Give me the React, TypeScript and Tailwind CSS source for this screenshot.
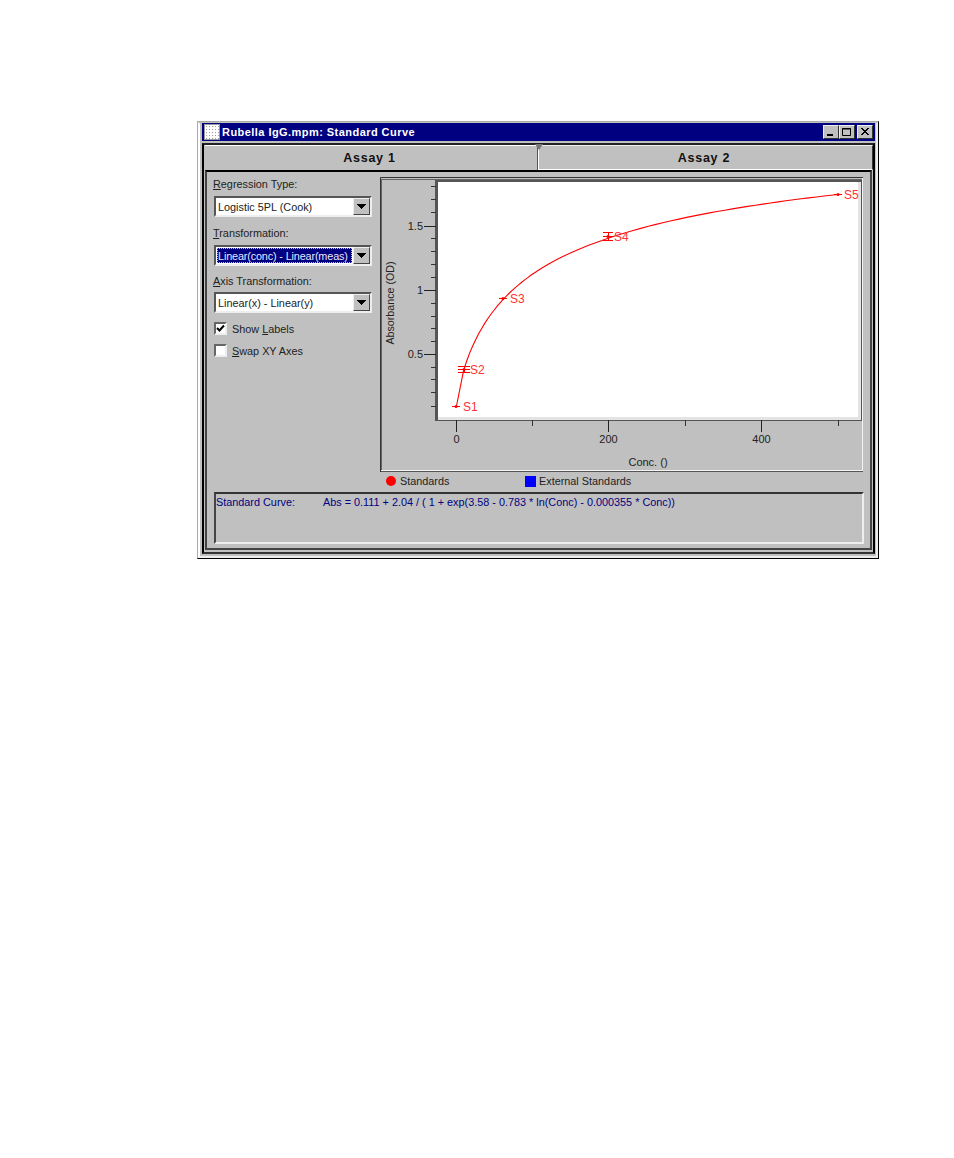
import React from "react";

const F = { fontFamily: '"Liberation Sans", Arial, sans-serif' };

function Arrow() {
  return (
    <svg width="9" height="6" viewBox="0 0 9 6" className="block">
      <path d="M0 0h9v1H0zM1 1h7v1H1zM2 2h5v1H2zM3 3h3v1H3zM4 4h1v1H4z" fill="#000" />
    </svg>
  );
}

function Select({ text, active }: { text: string; active?: boolean }) {
  return (
    <div className="ml-[1px] h-[21px] w-[158px] flex border-2 border-t-[#555] border-l-[#555] border-r-[#eee] border-b-[#eee] bg-white">
      <div className="flex-1 min-w-0 flex items-center p-px">
        <div
          className={
            active
              ? "w-full h-full flex items-center bg-[#000080] text-[#e8e8ff] border border-dotted border-[#c8c870] whitespace-nowrap tracking-[-0.15px]"
              : "w-full h-full flex items-center pl-[1px] text-[#222] whitespace-nowrap"
          }
        >
          {text}
        </div>
      </div>
      <div className="w-[17px] flex items-center justify-center bg-[#c0c0c0] border border-t-[#eee] border-l-[#eee] border-r-[#444] border-b-[#444]">
        <Arrow />
      </div>
    </div>
  );
}

function Check({ checked, label }: { checked?: boolean; label: React.ReactNode }) {
  return (
    <div className="ml-[1px] flex items-center h-[13px] gap-[5px] text-[#222]">
      <div className="w-[13px] h-[13px] bg-white border-2 border-t-[#666] border-l-[#666] border-r-[#eee] border-b-[#eee] flex items-center justify-center">
        {checked && (
          <svg width="9" height="9" viewBox="0 0 9 9" className="block">
            <path d="M1 4l2.5 2.5L8 1.5" fill="none" stroke="#000" strokeWidth="2" />
          </svg>
        )}
      </div>
      <span>{label}</span>
    </div>
  );
}

const red = "#ff0000";

function curve(c: number) {
  const v = 0.111 + 2.04 / (1 + Math.exp(3.58 - 0.783 * Math.log(c) - 0.000355 * c));
  const off = c < 200 ? 2 : 2 - ((c - 200) * 2.8) / 300;
  return [456 + c * 0.7635, 406 - (v - 0.111) * 127.2 + off];
}

function Plot() {
  const pts: string[] = ["456.5,406"];
  for (let c = 10; c <= 490; c += c < 100 ? 4 : 10) {
    const [x, y] = curve(c);
    pts.push(`${x.toFixed(1)},${y.toFixed(1)}`);
  }
  pts.push("838,194.5");
  const yTicks = [186, 199, 212, 238, 251, 264, 277, 303, 316, 328, 341, 367, 379, 392, 406];
  const yMajor: [number, string][] = [[226, "1.5"], [290, "1"], [354, "0.5"]];
  const xMajor: [number, string][] = [[456, "0"], [608, "200"], [761, "400"]];
  const xMinor = [532, 685, 838];
  const markers: [number, number, number, number, number, string][] = [
    [456, 406, 4, 0, 463, "S1"],
    [464, 369, 6, 3, 470, "S2"],
    [503, 298, 4, 0, 510, "S3"],
    [608, 236, 5, 4, 614, "S4"],
    [838, 194, 4, 0, 844, "S5"],
  ];
  return (
    <svg width="483" height="295" viewBox="380 177 483 295" className="block" style={F}>
      <rect x="380" y="177" width="483" height="295" fill="#c0c0c0" />
      <path d="M380.5 472V177.5H863" stroke="#333" fill="none" />
      <path d="M382 179.5H862M381.5 179V471" stroke="#666" fill="none" />
      <path d="M381 470.5H862.5V178" stroke="#f4f4f4" fill="none" />
      <path d="M381 471.5H863" stroke="#555" fill="none" />
      <rect x="435" y="180" width="427" height="240" fill="#555" />
      <rect x="438" y="182" width="423" height="238" fill="#e4e4e4" />
      <rect x="438" y="182" width="420" height="235" fill="#fff" />
      <rect x="435" y="420" width="427" height="1" fill="#555" />
      {yTicks.map((y) => (
        <rect key={y} x="431" y={y} width="5" height="1" fill="#333" />
      ))}
      {yMajor.map(([y, t]) => (
        <g key={t}>
          <rect x="424" y={y} width="12" height="1" fill="#222" />
          <text x="423" y={y + 4} fontSize="11" textAnchor="end" fill="#222">{t}</text>
        </g>
      ))}
      {xMajor.map(([x, t]) => (
        <g key={t}>
          <rect x={x} y="420" width="1" height="12" fill="#222" />
          <text x={x + 0.5} y="443" fontSize="11" textAnchor="middle" fill="#222">{t}</text>
        </g>
      ))}
      {xMinor.map((x) => (
        <rect key={x} x={x} y="420" width="1" height="6" fill="#333" />
      ))}
      <text x="648" y="466" fontSize="11" textAnchor="middle" fill="#222">Conc. ()</text>
      <text transform="translate(394 303) rotate(-90)" fontSize="10.7" textAnchor="middle" fill="#222">Absorbance (OD)</text>
      <polyline points={pts.join(" ")} fill="none" stroke={red} strokeWidth="1.1" />
      {markers.map(([x, y, w, h, lx, t]) => (
        <g key={t}>
          <path d={`M${x - w} ${y + 0.5}H${x + w}`} stroke={red} />
          <circle cx={x} cy={y + 0.5} r="1.5" fill={red} />
          {h > 0 && (
            <path
              d={`M${x - w} ${y - h + 0.5}H${x + w}M${x - w} ${y + h + 0.5}H${x + w}M${x + 0.5} ${y - h}V${y + h}`}
              stroke={red}
              fill="none"
            />
          )}
          <text x={lx} y={y + 5} fontSize="12" fill="#ff3333">
            {t}
          </text>
        </g>
      ))}
    </svg>
  );
}

function TitleButton({ kind, gap }: { kind: "min" | "max" | "close"; gap?: boolean }) {
  return (
    <div
      className={
        "w-[16px] h-[14px] bg-[#c0c0c0] border border-t-[#eee] border-l-[#eee] border-r-[#333] border-b-[#333] flex items-center justify-center " +
        (gap ? "ml-[2px]" : "")
      }
    >
      <svg width="12" height="10" viewBox="0 0 12 10" className="block">
        {kind === "min" && <rect x="2" y="7" width="6" height="2" fill="#000" />}
        {kind === "max" && <path d="M1.5 1.5h8v7h-8zM1 2h9" fill="none" stroke="#000" />}
        {kind === "close" && <path d="M2 1l7 7M3 1l7 7M9 1L2 8M10 1L3 8" stroke="#000" fill="none" />}
      </svg>
    </div>
  );
}

export default function App() {
  return (
    <div className="min-h-[1158px] bg-white pl-[197px] pt-[121px] text-[10.85px] leading-[14px]" style={F}>
      <div className="w-[682px] h-[438px] border border-t-[#aaa] border-l-[#aaa] border-r-black border-b-black bg-[#c0c0c0]">
        <div className="h-full border-2 border-t-[#c0c0c0] border-l-white border-r-[#eee] border-b-[#eee] pl-[2px] pr-[1px] flex flex-col">
          {/* title bar */}
          <div className="h-[18px] shrink-0 bg-[#000080] flex items-center pl-[2px] pr-[2px] -mt-[1px]">
            <div className="w-[16px] h-[16px] bg-white border border-[#999] bg-[radial-gradient(#999_1px,transparent_1px)] bg-[length:3px_3px]" />
            <span className="ml-[2px] text-white font-bold text-[11px] tracking-[0.45px]">Rubella IgG.mpm: Standard Curve</span>
            <div className="ml-auto flex">
              <TitleButton kind="min" />
              <TitleButton kind="max" />
              <TitleButton kind="close" gap />
            </div>
          </div>

          {/* frame */}
          <div className="mt-[2px] flex-1 min-h-0 border-2 border-black border-t-[#222] border-b-[#333] flex flex-col relative mb-[2px]">
            {/* tabs */}
            <div className="h-[25px] shrink-0 flex">
              <div className="w-[333px] ml-[1px] flex items-center justify-center border-t border-t-white border-r border-r-[#555] font-bold text-[12.5px] tracking-[0.75px] text-[#111] rounded-tr-[2px] pr-[3px]">
                Assay 1
              </div>
              <div className="flex-1 flex items-center justify-center border-l border-l-white border-b border-b-white border-t border-t-[#eee] font-bold text-[12.5px] tracking-[0.75px] text-[#111] border-r border-r-[#333] pr-[3px]">
                Assay 2
              </div>
            </div>
            <div className="absolute left-[331px] top-[-1px] w-0 h-0 border-l-[4px] border-r-[4px] border-t-[6px] border-l-transparent border-r-transparent border-t-[#777]" />
            {/* body */}
            <div className="flex-1 min-h-0 mx-[1px] mb-[2px] border-2 border-t-black border-l-[#444] border-r-[#444] border-b-[#444] pl-[6px] pr-[6px] pt-[5px] flex flex-col">
              <div className="flex">
                <div className="w-[167px] shrink-0 text-[#222]">
                  <div className="h-[14px]"><span className="underline">R</span>egression Type:</div>
                  <div className="mt-[5px]"><Select text="Logistic 5PL (Cook)" /></div>
                  <div className="h-[14px] mt-[9px]"><span className="underline">T</span>ransformation:</div>
                  <div className="mt-[5px]"><Select text="Linear(conc) - Linear(meas)" active /></div>
                  <div className="h-[14px] mt-[8px]"><span className="underline">A</span>xis Transformation:</div>
                  <div className="mt-[4px]"><Select text="Linear(x) - Linear(y)" /></div>
                  <div className="mt-[9px]"><Check checked label={<>Show <span className="underline">L</span>abels</>} /></div>
                  <div className="mt-[9px]"><Check label={<><span className="underline">S</span>wap XY Axes</>} /></div>
                </div>
                <Plot />
              </div>
              <div className="h-[18px] flex items-center text-[#222]">
                <div className="ml-[173px] w-[10px] h-[10px] rounded-full bg-[#ff0000]" />
                <span className="ml-[4px] w-[125px]">Standards</span>
                <div className="w-[11px] h-[11px] bg-[#0000ff]" />
                <span className="ml-[3px]">External Standards</span>
              </div>
              <div className="mt-[2px] ml-[1px] h-[52px] border border-t-2 border-t-[#333] border-l-2 border-l-[#444] border-r-2 border-r-[#eee] border-b-2 border-b-[#eee] flex text-[#000080] pt-[1px]">
                <span className="w-[107px] shrink-0">Standard Curve:</span>
                <span className="whitespace-nowrap">Abs = 0.111 + 2.04 / ( 1 + exp(3.58 - 0.783 * ln(Conc) - 0.000355 * Conc))</span>
              </div>
            </div>
          </div>
        </div>
      </div>
    </div>
  );
}
